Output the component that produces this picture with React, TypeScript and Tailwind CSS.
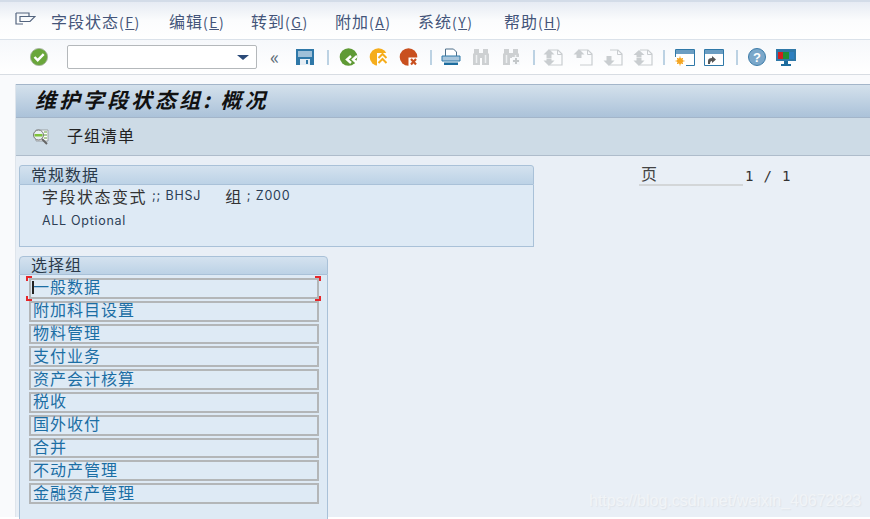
const menus = [
  { label: "字段状态", key: "F", width: "w-[118px]" },
  { label: "编辑", key: "E", width: "w-[82px]" },
  { label: "转到", key: "G", width: "w-[84px]" },
  { label: "附加", key: "A", width: "w-[83px]" },
  { label: "系统", key: "Y", width: "w-[86px]" },
  { label: "帮助", key: "H", width: "w-[70px]" },
];

const groups = ["附加科目设置", "物料管理", "支付业务", "资产会计核算", "税收", "国外收付", "合并", "不动产管理", "金融资产管理"];

function MenuIcon() {
  return (
    <svg width="21" height="14" viewBox="0 0 21 14" fill="none" stroke="#54657f" strokeWidth="1.2">
      <path d="M1 1h13v3M1 1v11h7M5 4.500h15l-5 5H5z" />
    </svg>
  );
}

function CheckIcon() {
  return (
    <svg width="20" height="18" viewBox="0 0 20 18">
      <circle cx="10" cy="9" r="8.600" fill="#6aa63b" stroke="#a5b0a0" strokeWidth="0.8" />
      <path d="M5.500 9l3.200 3.200 6-6" fill="none" stroke="#fff" strokeWidth="2.400" />
    </svg>
  );
}

function SaveIcon() {
  return (
    <svg width="20" height="18" viewBox="0 0 20 18">
      <path d="M1 1h18v16H1z" fill="#2f78a8" />
      <path d="M3 3h14v6H3z" fill="#9fc0d8" />
      <path d="M5 11h10v6H5z" fill="#e6eef5" />
      <path d="M11 12h2v4h-2z" fill="#2f78a8" />
    </svg>
  );
}

function NavIcon(props: { fill: string; kind: "back" | "up" | "cancel" }) {
  return (
    <svg width="20" height="18" viewBox="0 0 20 18">
      <circle cx="9.500" cy="9" r="8.800" fill={props.fill} />
      {props.kind === "back" && (
        <path d="M12 8l-4 3.500 4 3.500M18 8l-4 3.500 4 3.500" fill="none" stroke="#fff" strokeWidth="2.400" />
      )}
      {props.kind === "up" && (
        <g>
          <path d="M8 5h11v13H8z" fill="#fff" />
          <path d="M9.500 10l4-4 4 4M9.500 15l4-4 4 4" fill="none" stroke="#f5ad1c" strokeWidth="2" />
        </g>
      )}
      {props.kind === "cancel" && (
        <g>
          <rect x="9.500" y="9.500" width="10" height="8.500" fill="#fff" />
          <path d="M12 11l5 5.500M17 11l-5 5.500" stroke="#c9501f" strokeWidth="2.200" />
        </g>
      )}
    </svg>
  );
}

function PrintIcon() {
  return (
    <svg width="20" height="18" viewBox="0 0 20 18">
      <path d="M4.500 8V1h8l3 3v4" fill="#fff" stroke="#4d6f8a" />
      <path d="M1 8h18v5H1z" fill="#a9c6dc" stroke="#2f78a8" />
      <path d="M3 14.500h14V17H3z" fill="#1d6c9e" />
    </svg>
  );
}

function FindIcon(props: { plus?: boolean }) {
  return (
    <svg width="20" height="18" viewBox="0 0 20 18" fill="#cdd0d2">
      <path d="M3 1h5v4l1 1v11H2V6l1-1zM12 1h5v4l1 1v11h-7V6l1-1z" />
      <path d="M8 5h4v5H8z" />
      <path d="M5.500 7v8M14.500 7v8" stroke="#eef0f2" strokeWidth="1.500" />
      {props.plus && <path d="M11 9h8v8h-8z" fill="#f7f9fb" />}
      {props.plus && <path d="M12 13h6M15 10v6" stroke="#c4c8ca" strokeWidth="2" />}
    </svg>
  );
}

function PageIcon(props: { kind: "first" | "prev" | "next" | "last" }) {
  return (
    <svg width="20" height="17" viewBox="0 0 20 17">
      <path d="M7 1h8l4 4v11H7" fill="none" stroke="#c9cdd0" strokeWidth="1.200" />
      <path d="M14.500 1v4.500H19" fill="none" stroke="#c9cdd0" />
      {(props.kind === "first" || props.kind === "prev") && <path d="M6 0l5.500 5.500H8.500V9h-5V5.500H.5z" fill="#c9cdd0" />}
      {props.kind === "first" && <path d="M6 17L.5 11.500h3V9.500h5v2h3z" fill="#c9cdd0" />}
      {props.kind === "next" && <path d="M6 17l5.500-5.500H8.500V7h-5v4.500H.5z" fill="#c9cdd0" />}
      {props.kind === "last" && <path d="M6 1l5.500 5H8.500v2.500h-5V6H.5zM6 17L.5 11.500h3V9h5v2.500h3z" fill="#c9cdd0" />}
    </svg>
  );
}

function WindowIcon(props: { kind: "new" | "link" }) {
  return (
    <svg width="20" height="17" viewBox="0 0 20 17">
      <path d="M.5.500h19v16H.5z" fill="#fff" stroke="#2f78a8" />
      <path d="M1 1h18v4H1z" fill="#6b9dc2" />
      {props.kind === "new" && (
        <g>
          <path d="M0 8h11v9H0z" fill="#fff" />
          <circle cx="5" cy="12" r="3" fill="#f5a623" />
          <path d="M5 7.500v9M.5 12h9M2 9l6 6M8 9l-6 6" stroke="#f5a623" />
        </g>
      )}
      {props.kind === "link" && <path d="M4 15v-3q0-3 4-3V7l4 3.500-4 3.500v-2q-2 0-2 3z" fill="#555" />}
    </svg>
  );
}

function HelpIcon() {
  return (
    <svg width="20" height="18" viewBox="0 0 20 18">
      <circle cx="10" cy="9" r="8.500" fill="#7aa7ca" stroke="#3d7ca8" />
      <text x="10" y="14" textAnchor="middle" fontSize="13" fontWeight="700" fill="#fff" fontFamily="Liberation Sans, sans-serif">?</text>
    </svg>
  );
}

function MonitorIcon() {
  return (
    <svg width="20" height="17" viewBox="0 0 20 17">
      <path d="M0 0h20v12H0z" fill="#2f78a8" />
      <path d="M2 3h5v7H2z" fill="#d21f1f" />
      <path d="M7 3h6v7H7z" fill="#1f8f35" />
      <path d="M13 3h5v7h-5z" fill="#2d7fc0" />
      <path d="M8 12h4v3H8zM5 15h10v2H5z" fill="#1d6c9e" />
    </svg>
  );
}

function Sep() {
  return <div className="w-[2px] h-[15px] bg-[#bcd2e3]" />;
}

function ListIcon() {
  return (
    <svg width="19" height="16" viewBox="0 0 19 16">
      <path d="M5 1h12v11H5z" fill="#fff" stroke="#9aa0a4" />
      <path d="M13 3h3M13 6h3M13 9h3" stroke="#5f9a35" />
      <circle cx="7.500" cy="6" r="5" fill="#e8eef0" stroke="#777" />
      <path d="M3.500 5h8v2.500h-8z" fill="#7ec23a" />
      <path d="M11 10l5 5" stroke="#666" strokeWidth="2" />
    </svg>
  );
}

export default function App() {
  return (
    <div className="w-[870px] h-[519px] overflow-hidden bg-white font-['Noto_Sans_CJK_SC',sans-serif] relative">
      <div className="h-[40px] pt-[9px] pl-[15px] flex items-start border-t-[2px] border-[#d3dce8] border-b border-b-[#dbe2ea] bg-gradient-to-b from-[#e6ebf3] via-[#fbfcfd] to-white text-[16px] leading-[20px] tracking-[1px] text-[#44557a]">
        <div className="w-[36px] mt-[1px]"><MenuIcon /></div>
        {menus.map(function (menu) {
          return (
            <div key={menu.key} className={menu.width}>
              {menu.label}
              <span className="text-[14px] tracking-[1.500px]">(<span className="underline">{menu.key}</span>)</span>
            </div>
          );
        })}
      </div>

      <div className="h-[35px] flex items-center bg-gradient-to-b from-[#f6f8fb] to-white border-b border-[#d8dde3]">
        <div className="ml-[29px]"><CheckIcon /></div>
        <div className="ml-[18px] w-[190px] h-[24px] border border-[#b4b8bb] rounded-[2px] bg-white flex items-center justify-end pr-[7px]">
          <div className="w-0 h-0 border-x-[6px] border-x-transparent border-t-[5px] border-t-[#2b4a78]" />
        </div>
        <div className="ml-[13px] w-[13px] text-[#5f6d7a] text-[19px] leading-none -mt-[4px]">«</div>
        <div className="ml-[12px]"><SaveIcon /></div>
        <div className="ml-[12px]"><Sep /></div>
        <div className="ml-[10px] flex gap-[10px]">
          <NavIcon fill="#5f9a35" kind="back" />
          <NavIcon fill="#f5ad1c" kind="up" />
          <NavIcon fill="#c9501f" kind="cancel" />
        </div>
        <div className="ml-[11px]"><Sep /></div>
        <div className="ml-[9px] flex gap-[10px]">
          <PrintIcon />
          <FindIcon />
          <FindIcon plus />
        </div>
        <div className="ml-[12px]"><Sep /></div>
        <div className="ml-[8px] flex gap-[10px]">
          <PageIcon kind="first" />
          <PageIcon kind="prev" />
          <PageIcon kind="next" />
          <PageIcon kind="last" />
        </div>
        <div className="ml-[10px]"><Sep /></div>
        <div className="ml-[10px] flex gap-[9px]">
          <WindowIcon kind="new" />
          <WindowIcon kind="link" />
        </div>
        <div className="ml-[12px]"><Sep /></div>
        <div className="ml-[9px]"><HelpIcon /></div>
        <div className="ml-[9px]"><MonitorIcon /></div>
      </div>

      <div className="h-[442px] bg-[#f9fafc] pl-[15px] pt-[9px]">
        <div className="h-[433px] bg-[#e9eff6] border-l border-[#dfe5ec]">
          <div className="h-[34px] flex items-center pl-[19px] pb-[2px] border-y border-[#a3b5c9] bg-gradient-to-b from-[#d4e1ec] to-[#abc2d9] text-[#111] text-[21px] tracking-[3px] font-bold italic whitespace-nowrap">
            维护字段状态组: 概况
          </div>
          <div className="h-[38px] flex items-center pl-[15px] gap-[17px] bg-[#cddbe6] border-b border-[#aebccb] text-[16px] tracking-[1px] text-[#222]">
            <ListIcon />
            <span className="-mt-[3px]">子组清单</span>
          </div>

          <div className="flex items-start">
            <div className="ml-[3px] mt-[9px] w-[515px]">
              <div className="h-[20px] pl-[11px] pb-[3px] flex items-center rounded-t-[3px] border border-[#a9c1d8] bg-gradient-to-b from-[#d4e2ef] to-[#bcd2e6] text-[16px] tracking-[1px] text-[#2b3a4a]">常规数据</div>
              <div className="h-[62px] border border-t-0 border-[#a9c1d8] bg-[#deeaf5] pl-[22px] text-[16px] tracking-[1.500px] text-[#333]">
                <div className="h-[22px] flex items-center whitespace-pre">
                  <span>字段状态变式</span>
                  <span className="ml-[5px] font-['Inter',sans-serif] text-[12.500px] tracking-[0.800px] text-[#2c3e55]">;; BHSJ</span>
                  <span className="ml-[24px]">组</span>
                  <span className="ml-[4px] font-['Inter',sans-serif] text-[12.500px] tracking-[0.800px] text-[#2c3e55]">; Z000</span>
                </div>
                <div className="h-[20px] mt-[4px] flex items-center font-['Inter',sans-serif] text-[12.500px] tracking-[0.700px] text-[#2c3e55]">ALL Optional</div>
              </div>

              <div className="mt-[9px] w-[309px]">
                <div className="h-[19px] pl-[11px] pb-[4px] flex items-center rounded-t-[4px] border border-[#a9c1d8] bg-gradient-to-b from-[#d4e2ef] to-[#bcd2e6] text-[16px] tracking-[1px] text-[#2b3a4a]">选择组</div>
                <div className="h-[270px] border-x border-[#a9c1d8] bg-[#deeaf5] pl-[9px] pt-[3px]">
                  <div className="relative w-[290px] h-[20.800px] border-2 border-[#b3b6b8] pl-[2px] pb-[4px] flex items-center text-[16px] tracking-[1px] text-[#1c6ea4]">
                    <span className="absolute left-[1px] top-[1px] w-[2px] h-[13px] bg-[#222]" />
                    <span className="absolute -left-[5px] -top-[4px] w-[6px] h-[5px] border-l-2 border-t-2 border-[#e6262a]" />
                    <span className="absolute -right-[4px] -top-[4px] w-[6px] h-[5px] border-r-2 border-t-2 border-[#e6262a]" />
                    <span className="absolute -left-[5px] -bottom-[4px] w-[6px] h-[5px] border-l-2 border-b-2 border-[#e6262a]" />
                    <span className="absolute -right-[4px] -bottom-[4px] w-[6px] h-[5px] border-r-2 border-b-2 border-[#e6262a]" />
                    一般数据
                  </div>
                  {groups.map(function (group) {
                    return (
                      <div key={group} className="mt-[2px] w-[290px] h-[20.800px] border-2 border-[#b3b6b8] pl-[2px] pb-[4px] flex items-center text-[16px] tracking-[1px] text-[#1c6ea4]">
                        {group}
                      </div>
                    );
                  })}
                </div>
              </div>
            </div>

            <div className="ml-[105px] mt-[6px] w-[104px] h-[24px] border-b-2 border-[#d3d6d8] pl-[2px] text-[16px] leading-[22px] text-[#444]">页</div>
            <div className="ml-[2px] mt-[10px] font-['DejaVu_Sans_Mono',monospace] text-[14px] tracking-[0.800px] whitespace-pre text-[#333]">1 / 1</div>
          </div>
        </div>
      </div>

      <div className="absolute left-[589px] top-[489px] font-['Liberation_Sans',sans-serif] text-[16px] text-[#f1f4f7] [text-shadow:1px_1px_1px_#dfe4ea]">
        https://blog.csdn.net/weixin_40672823
      </div>
    </div>
  );
}
